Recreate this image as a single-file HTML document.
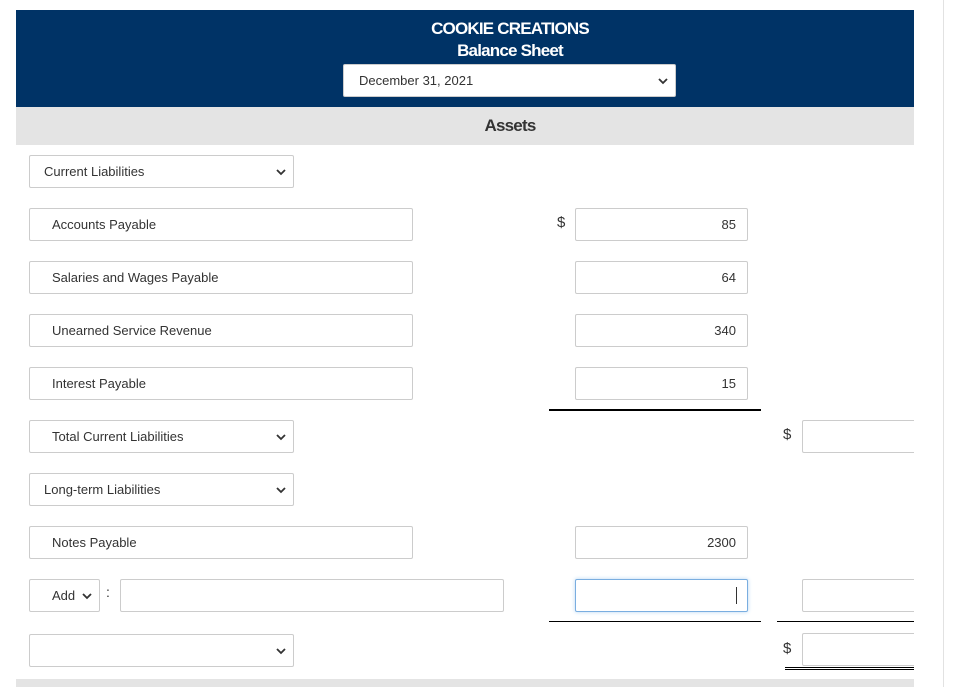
<!DOCTYPE html>
<html><head><meta charset="utf-8"><style>
body{margin:0;width:953px;height:687px;background:#fff;position:relative;overflow:hidden;font-family:"Liberation Sans",sans-serif;color:#333}
.a{position:absolute;box-sizing:border-box}
.box{position:absolute;box-sizing:border-box;border:1px solid #ccc;border-radius:2px;background:#fff;height:33px;font-size:13px;color:#333;line-height:32px}
.num{text-align:right;padding-right:11px}
.chev{position:absolute;right:7px;top:12px}
.d{position:absolute;font-size:15px;color:#333}
.hr{position:absolute;height:2px;background:#000}
.clip{position:absolute;left:0;top:0;width:914px;height:687px;overflow:hidden}
</style></head><body>
<div class="clip">
<div class="a" style="left:16px;top:10px;width:898px;height:97px;background:#003366"></div>
<div class="a" style="left:0;top:18px;width:1020px;text-align:center;color:#fff;font-weight:bold;font-size:17px;letter-spacing:-0.8px;line-height:22px">COOKIE CREATIONS<br>Balance Sheet</div>
<div class="box" style="left:343px;top:64px;width:333px;padding-left:15px;font-size:13px">December 31, 2021<svg class="chev" width="10" height="8" viewBox="0 0 10 8"><path d="M1 2l4 4 4-4" stroke="#333" stroke-width="1.8" fill="none"/></svg></div>
<div class="a" style="left:16px;top:107px;width:898px;height:38px;background:#e4e4e4"></div>
<div class="a" style="left:0;top:107px;width:1020px;text-align:center;font-weight:bold;font-size:17px;line-height:38px;letter-spacing:-0.8px;color:#333">Assets</div>

<div class="box" style="left:29px;top:155px;width:265px;padding-left:14px">Current Liabilities<svg class="chev" width="10" height="8" viewBox="0 0 10 8"><path d="M1 2l4 4 4-4" stroke="#333" stroke-width="1.8" fill="none"/></svg></div>

<div class="box" style="left:29px;top:208px;width:384px;padding-left:22px">Accounts Payable</div>
<div class="d" style="left:557px;top:214px">$</div>
<div class="box num" style="left:575px;top:208px;width:173px">85</div>

<div class="box" style="left:29px;top:261px;width:384px;padding-left:22px">Salaries and Wages Payable</div>
<div class="box num" style="left:575px;top:261px;width:173px">64</div>

<div class="box" style="left:29px;top:314px;width:384px;padding-left:22px">Unearned Service Revenue</div>
<div class="box num" style="left:575px;top:314px;width:173px">340</div>

<div class="box" style="left:29px;top:367px;width:384px;padding-left:22px">Interest Payable</div>
<div class="box num" style="left:575px;top:367px;width:173px">15</div>
<div class="hr" style="left:549px;top:409px;width:212px"></div>

<div class="box" style="left:29px;top:420px;width:265px;padding-left:22px">Total Current Liabilities<svg class="chev" width="10" height="8" viewBox="0 0 10 8"><path d="M1 2l4 4 4-4" stroke="#333" stroke-width="1.8" fill="none"/></svg></div>
<div class="d" style="left:783px;top:426px">$</div>
<div class="box" style="left:802px;top:420px;width:120px"></div>

<div class="box" style="left:29px;top:473px;width:265px;padding-left:14px">Long-term Liabilities<svg class="chev" width="10" height="8" viewBox="0 0 10 8"><path d="M1 2l4 4 4-4" stroke="#333" stroke-width="1.8" fill="none"/></svg></div>

<div class="box" style="left:29px;top:526px;width:384px;padding-left:22px">Notes Payable</div>
<div class="box num" style="left:575px;top:526px;width:173px">2300</div>

<div class="box" style="left:29px;top:579px;width:71px;padding-left:22px">Add<svg class="chev" width="10" height="8" viewBox="0 0 10 8"><path d="M1 2l4 4 4-4" stroke="#333" stroke-width="1.8" fill="none"/></svg></div>
<div class="d" style="left:106px;top:584px;font-size:14px">:</div>
<div class="box" style="left:120px;top:579px;width:384px"></div>
<div class="box" style="left:575px;top:579px;width:173px;border-color:#7aaee0;box-shadow:0 0 4px #b8d6f2"><div class="a" style="left:160px;top:7px;width:1px;height:17px;background:#333"></div></div>
<div class="box" style="left:802px;top:579px;width:120px"></div>
<div class="hr" style="left:549px;top:621px;width:212px;height:1px"></div>
<div class="hr" style="left:777px;top:621px;width:137px;height:1px"></div>

<div class="box" style="left:29px;top:634px;width:265px"><svg class="chev" width="10" height="8" viewBox="0 0 10 8"><path d="M1 2l4 4 4-4" stroke="#333" stroke-width="1.8" fill="none"/></svg></div>
<div class="d" style="left:783px;top:640px">$</div>
<div class="box" style="left:802px;top:633px;width:120px"></div>
<div class="hr" style="left:785px;top:667px;width:129px;height:1px"></div>
<div class="hr" style="left:785px;top:669px;width:129px;height:1px"></div>
<div class="a" style="left:16px;top:679px;width:898px;height:8px;background:#e4e4e4"></div>
</div>
<div class="a" style="left:943px;top:0;width:1px;height:687px;background:#e2e2e2"></div>
</body></html>
